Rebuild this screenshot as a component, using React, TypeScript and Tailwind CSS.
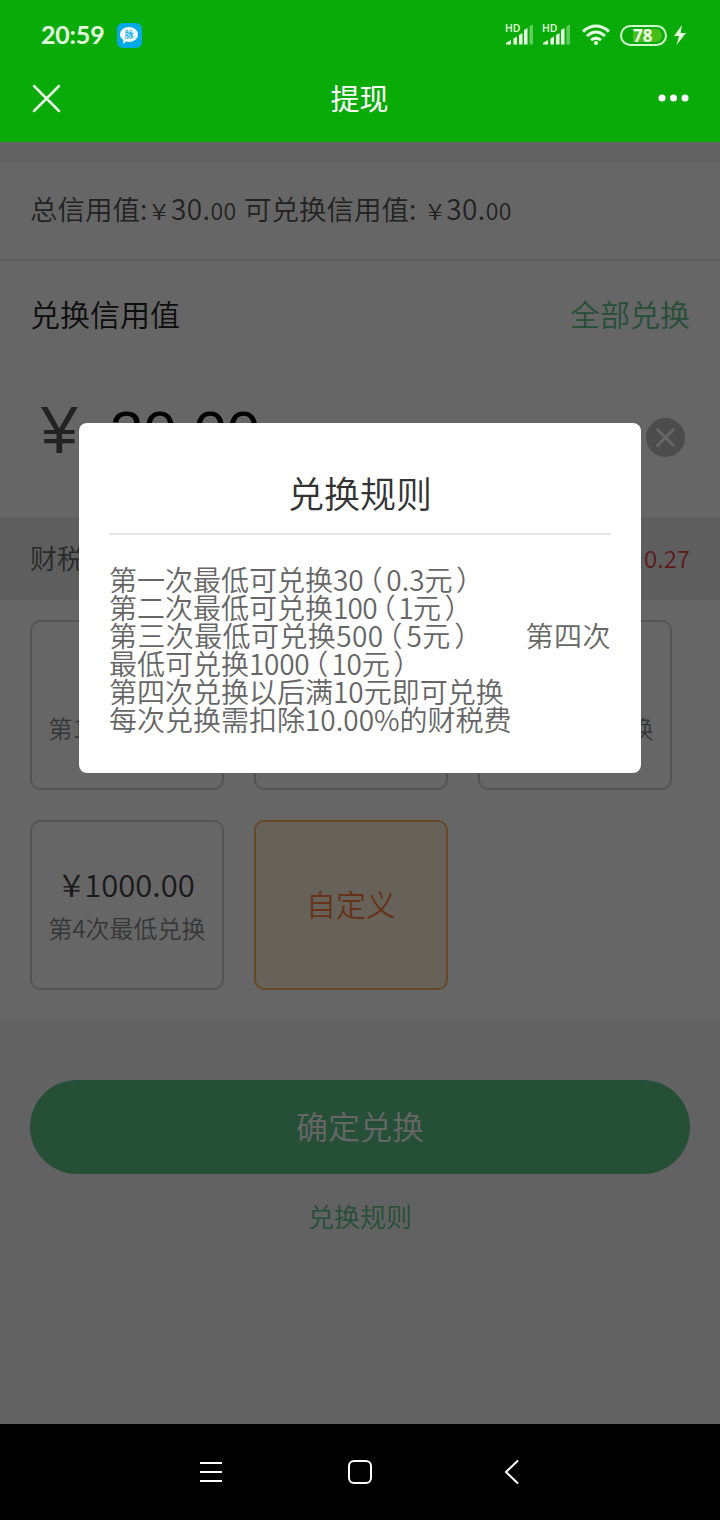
function Signal() {
  return (
    <svg width="30" height="28" viewBox="0 -2 30 28" fill="#e3ffdf">
      <text x="0" y="8.500" fontSize="10.500" fontWeight="600" fontFamily="Open Sans, sans-serif" textLength="15.500" lengthAdjust="spacingAndGlyphs">HD</text>
      <path d="M1 21.500v-1.500l5-3v4.500z" />
      <path d="M8.500 15.500l3.500-2v8H8.500z" />
      <path d="M14 12l3.500-2v11.500H14z" />
      <path d="M19 7l3.500-2v16.500H19z" />
      <path d="M24.500 3l3.500-1.500v20h-3.500z" opacity=".4" />
    </svg>
  );
}

function Open() {
  return <span className="pr-[3.500px] pl-[5px] [font-feature-settings:'halt']">（</span>;
}

function Close() {
  return <span className="pl-[3.500px] [font-feature-settings:'halt']">）</span>;
}

function Amount({ amount, note }: { amount: string; note: string }) {
  return (
    <div className="flex h-[170px] flex-col items-center rounded-[10px] border-2 border-[#d2d2d2] pt-[42px]">
      <div className="pl-[4px] text-[31px] leading-[40px] text-[#444]">
        <span className="mr-[4px] inline-block scale-x-115">¥</span>
        {amount}
      </div>
      <div className="mt-[6px] text-[24px] leading-[36px] whitespace-nowrap text-[#888]">{note}</div>
    </div>
  );
}

function SmallMoney({ whole, cents }: { whole: string; cents: string }) {
  return (
    <span className="tracking-[0.400px]">
      <span className="mr-[5px] ml-[6px] inline-block scale-x-125 text-[22px] leading-none">¥</span>
      {whole}.<span className="text-[23px]">{cents}</span>
    </span>
  );
}

function Header() {
  return (
    <header className="h-[142px] bg-[#09ab09] text-white">
      <div className="flex h-[70px] items-center pl-[41px]">
        <span className="w-[64px] font-['Lato',sans-serif] text-[25px] font-bold tracking-[-0.200px] text-[#e3ffdf]">20:59</span>
        <svg className="ml-[12px]" width="25" height="25" viewBox="0 0 25 25">
          <rect width="25" height="25" rx="6" fill="#05a9e6" />
          <path d="M12 4c5 0 9 3.200 9 7.500s-4 7.500-9 7.500c-1 0-2-.1-3-.4l-2.800 2.300.1-4C4.300 15.600 3 13.800 3 11.500 3 7.200 7 4 12 4z" fill="#f2fdff" />
          <text x="7.800" y="15" fontSize="9" fill="#05a9e6" fontWeight="500" fontFamily="Noto Sans CJK SC, sans-serif">脉</text>
        </svg>
        <div className="ml-auto flex items-center pr-[33px]">
          <Signal />
          <span className="w-[7px]" />
          <Signal />
          <svg className="ml-[9px]" width="30" height="22" viewBox="0 0 30 22" fill="none" stroke="#e3ffdf" strokeWidth="3">
            <path d="M2 7.500Q15-3.500 28 7.500" />
            <path d="M6 12Q15 4 24 12" />
            <path d="M10 16.200Q15 12 20 16.200" />
            <circle cx="15" cy="19" r="2" fill="#e3ffdf" stroke="none" />
          </svg>
          <div className="ml-[9px] flex h-[21px] w-[47px] items-center rounded-full border-2 border-[#d0f8cb] pl-[11px]">
            <span className="flex h-[13px] w-[29px] items-center rounded-r-full bg-[#48bd18] font-['Open_Sans',sans-serif] text-[17px] leading-none font-bold text-[#f0ffec]">78</span>
          </div>
          <svg className="ml-[6px]" width="14" height="20" viewBox="0 0 14 20" fill="#e3ffdf">
            <path d="M9 0L1 11h5L3.500 20 13 8H7.500z" />
          </svg>
        </div>
      </div>
      <div className="flex h-[56px] items-center justify-between pr-[31px] pl-[32px]">
        <svg width="29" height="29" viewBox="0 0 29 29" stroke="#e8ffe5" strokeWidth="2.500" strokeLinecap="round">
          <path d="M2 2l25 25M27 2L2 27" />
        </svg>
        <h1 className="pb-px text-[29px] leading-none font-normal">提现</h1>
        <svg width="31" height="8" viewBox="0 0 31 8" fill="#fff">
          <circle cx="4" cy="4" r="3.500" />
          <circle cx="15.500" cy="4" r="3.500" />
          <circle cx="27" cy="4" r="3.500" />
        </svg>
      </div>
    </header>
  );
}

export default function App() {
  return (
    <div className="flex h-[1520px] w-[720px] flex-col overflow-hidden bg-[#f5f5f5] font-['Noto_Sans_CJK_SC',sans-serif] font-[350]">
      <Header />
      <main className="relative flex h-[1282px] flex-col pt-[20px]">
        <section className="flex h-[99px] items-center border-b-2 border-[#e6e6e6] bg-white pb-[4px] pl-[30px] text-[28px] whitespace-nowrap text-[#555]">
          <div className="w-[214px]">
            <span className="text-[27.500px]">总信用值:</span>
            <SmallMoney whole="30" cents="00" />
          </div>
          <div>
            <span className="text-[27.500px]">可兑换信用值:</span> <SmallMoney whole="30" cents="00" />
          </div>
        </section>
        <section className="h-[256px] bg-white px-[30px] pt-[30px]">
          <div className="flex justify-between text-[30px] leading-[44px]">
            <span className="text-[#222]">兑换信用值</span>
            <span className="text-[#5cc589]">全部兑换</span>
          </div>
          <div className="mt-[60px] flex h-[84px] items-center">
            <span className="w-[80px] pb-[14px] pl-[11px] font-['Liberation_Sans',sans-serif] text-[66px] leading-none font-normal text-[#555]">¥</span>
            <span className="pb-[8px] font-['Liberation_Sans',sans-serif] text-[60px] leading-none font-normal text-black">30.00</span>
            <svg className="mr-[5px] ml-auto" width="39" height="39" viewBox="0 0 39 39">
              <circle cx="19.500" cy="19.500" r="19.500" fill="#bdbdbd" />
              <path d="M11.500 11.500l16 16M27.500 11.500l-16 16" stroke="#fff" strokeWidth="3" strokeLinecap="round" />
            </svg>
          </div>
        </section>
        <section className="flex h-[83px] items-center justify-between bg-[#ebebeb] px-[30px] pb-px text-[27px] text-[#666]">
          <span>财税费</span>
          <span className="text-[24px] text-[#e64545]">0.27</span>
        </section>
        <section className="grid h-[420px] grid-cols-[194px_194px_194px] content-start gap-[30px] bg-white px-[30px] pt-[20px]">
          <Amount amount="30.00" note="第1次最低兑换" />
          <Amount amount="100.00" note="第2次最低兑换" />
          <Amount amount="500.00" note="第3次最低兑换" />
          <Amount amount="1000.00" note="第4次最低兑换" />
          <div className="flex h-[170px] items-center justify-center rounded-[10px] border-2 border-[#ffb45a] bg-[#fff5e1] pb-[4px] text-[30px] text-[#ff8040]">
            自定义
          </div>
        </section>
        <section className="flex flex-col items-center px-[30px] pt-[60px]">
          <button className="h-[94px] w-full rounded-full bg-[#5cc589] pb-[4px] text-[32px] text-white">确定兑换</button>
          <a className="mt-[23px] text-[26px] leading-[38px] text-[#5cc589]">兑换规则</a>
        </section>
        <div className="absolute inset-0 bg-black/60">
          <div className="mx-auto mt-[281px] h-[350px] w-[562px] rounded-[8px] bg-white px-[30px] pt-[41px]">
            <h2 className="h-[71px] border-b-2 border-[#e4e4e4] text-center text-[36px] leading-[56px] text-[#333]">兑换规则</h2>
            <div className="pt-[30px] text-[28px] leading-[28px] whitespace-nowrap text-[#666]">
              <p>第一次最低可兑换30<Open />0.3元<Close /></p>
              <p>第二次最低可兑换<span className="tracking-[-0.800px]">100<Open />1</span>元<Close /></p>
              <p className="flex justify-between">
                <span className="tracking-[0.400px]">第三次最低可兑换500<Open />5元<Close /></span>
                <span className="tracking-[0.500px]">第四次</span>
              </p>
              <p>最低可兑换<span className="tracking-[-0.300px]">1000<Open />10</span>元<Close /></p>
              <p>第四次兑换以后满10元即可兑换</p>
              <p>每次兑换需扣除10.00%的财税费</p>
            </div>
          </div>
        </div>
      </main>
      <nav className="flex h-[96px] items-center bg-black pl-[200px]">
        <svg width="22" height="22" viewBox="0 0 22 22" stroke="#fff" strokeWidth="2">
          <path d="M0 2h22M0 11h22M0 20h22" />
        </svg>
        <svg className="ml-[126px]" width="24" height="24" viewBox="0 0 24 24" fill="none" stroke="#fff" strokeWidth="2">
          <rect x="1" y="1" width="22" height="22" rx="5" />
        </svg>
        <svg className="ml-[132px]" width="16" height="26" viewBox="0 0 16 26" fill="none" stroke="#fff" strokeWidth="2">
          <path d="M14 1.500L2 13l12 11.500" />
        </svg>
      </nav>
    </div>
  );
}
